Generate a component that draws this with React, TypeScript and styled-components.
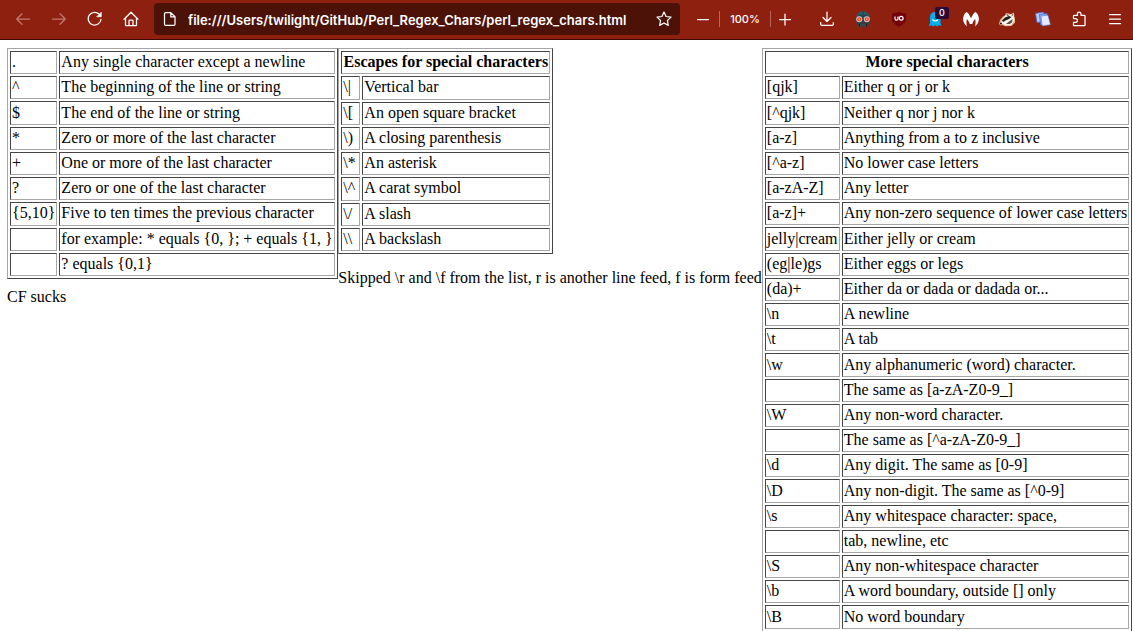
import React from "react";
import styled, { createGlobalStyle } from "styled-components";

const Global = createGlobalStyle`
  body {
    margin: 0;
    background: #fff;
    color: #000;
    font: 16px/19px "Liberation Serif", "Times New Roman", serif;
    overflow: hidden;
  }
`;

const Toolbar = styled.header`
  display: flex;
  align-items: center;
  height: 38px;
  padding: 0 0 1px 5px;
  background: #8e2010;
  border-bottom: 1px solid #3f0a03;
  font-family: Inter, "Liberation Sans", sans-serif;
  color: #fff;
`;

const ToolButton = styled.button<{ $width?: number }>`
  display: flex;
  align-items: center;
  justify-content: center;
  flex: none;
  width: ${(p) => p.$width ?? 36}px;
  height: 32px;
  padding: 0;
  border: 0;
  background: none;
  color: #fff;

  &:disabled {
    color: #c07a6f;
  }
`;

const AddressBar = styled.form`
  display: flex;
  align-items: center;
  flex: 1;
  min-width: 0;
  height: 32px;
  margin: 0 6px 0 5px;
  padding-left: 8px;
  border-radius: 4px;
  background: #4c1207;
`;

const AddressInput = styled.input`
  flex: 1;
  min-width: 0;
  margin-left: 10px;
  padding: 2px 0 0;
  border: 0;
  outline: 0;
  background: none;
  color: #fff;
  font: 600 13px/20px Inter, "Liberation Sans", sans-serif;
`;

const Divider = styled.span`
  flex: none;
  width: 1px;
  height: 16px;
  background: #b4675a;
`;

const ZoomLevel = styled.button`
  flex: none;
  width: 50px;
  padding: 0;
  border: 0;
  background: none;
  color: #fff;
  font: 500 11px/16px Inter, "Liberation Sans", sans-serif;
`;

const Extensions = styled.nav`
  display: flex;
  margin-left: 10px;
`;

const BadgeHolder = styled.span`
  position: relative;
  display: flex;
`;

const Badge = styled.span`
  position: absolute;
  top: -4px;
  right: -6px;
  width: 14px;
  border-radius: 2px;
  background: #2b0a35;
  color: #fff;
  font: 500 9px/12px Inter, "Liberation Sans", sans-serif;
  text-align: center;
`;

const Page = styled.main`
  display: flex;
  align-items: flex-start;
  padding: 8px 0 0 7px;
`;

const Column = styled.section`
  flex: none;
`;

const Note = styled.p<{ $gap: number }>`
  margin: ${(p) => p.$gap}px 0 0;
  white-space: nowrap;
`;

const Grid = styled.table<{ $height: number }>`
  height: ${(p) => p.$height}px;
  border: 1px solid;
  border-color: #a6a6a6 #454545 #454545 #a6a6a6;
  border-collapse: separate;
  border-spacing: 2px;
  table-layout: fixed;
`;

const GridCol = styled.col<{ $width: number }>`
  width: ${(p) => p.$width}px;
`;

const Cell = styled.td`
  padding: 0 1px 2px;
  border: 1px solid;
  border-color: #454545 #a6a6a6 #a6a6a6 #454545;
  white-space: nowrap;
`;

type Row = [string, string];

const basics: Row[] = [
  [".", "Any single character except a newline"],
  ["^", "The beginning of the line or string"],
  ["$", "The end of the line or string"],
  ["*", "Zero or more of the last character"],
  ["+", "One or more of the last character"],
  ["?", "Zero or one of the last character"],
  ["{5,10}", "Five to ten times the previous character"],
  ["", "for example: * equals {0, }; + equals {1, }"],
  ["", "? equals {0,1}"],
];

const escapes: Row[] = [
  ["\\|", "Vertical bar"],
  ["\\[", "An open square bracket"],
  ["\\)", "A closing parenthesis"],
  ["\\*", "An asterisk"],
  ["\\^", "A carat symbol"],
  ["\\/", "A slash"],
  ["\\\\", "A backslash"],
];

const specials: Row[] = [
  ["[qjk]", "Either q or j or k"],
  ["[^qjk]", "Neither q nor j nor k"],
  ["[a-z]", "Anything from a to z inclusive"],
  ["[^a-z]", "No lower case letters"],
  ["[a-zA-Z]", "Any letter"],
  ["[a-z]+", "Any non-zero sequence of lower case letters"],
  ["jelly|cream", "Either jelly or cream"],
  ["(eg|le)gs", "Either eggs or legs"],
  ["(da)+", "Either da or dada or dadada or..."],
  ["\\n", "A newline"],
  ["\\t", "A tab"],
  ["\\w", "Any alphanumeric (word) character."],
  ["", "The same as [a-zA-Z0-9_]"],
  ["\\W", "Any non-word character."],
  ["", "The same as [^a-zA-Z0-9_]"],
  ["\\d", "Any digit. The same as [0-9]"],
  ["\\D", "Any non-digit. The same as [^0-9]"],
  ["\\s", "Any whitespace character: space,"],
  ["", "tab, newline, etc"],
  ["\\S", "Any non-whitespace character"],
  ["\\b", "A word boundary, outside [] only"],
  ["\\B", "No word boundary"],
];

interface RegexTableProps {
  title?: string;
  rows: Row[];
  widths: [number, number];
  height: number;
}

function RegexTable({ title, rows, widths, height }: RegexTableProps) {
  return (
    <Grid $height={height}>
      <colgroup>
        <GridCol $width={widths[0]} />
        <GridCol $width={widths[1]} />
      </colgroup>
      <tbody>
        {title && (
          <tr>
            <Cell as="th" colSpan={2}>{title}</Cell>
          </tr>
        )}
        {rows.map(([key, text]) => (
          <tr key={key + text}>
            <Cell>{key || "\u00a0"}</Cell>
            <Cell>{text}</Cell>
          </tr>
        ))}
      </tbody>
    </Grid>
  );
}

const Line = ({ children }: { children: React.ReactNode }) => (
  <svg width="16" height="16" viewBox="0 0 16 16" fill="none" stroke="currentColor" strokeWidth="1.25" strokeLinecap="round" strokeLinejoin="round" aria-hidden="true">
    {children}
  </svg>
);

const Art = ({ children }: { children: React.ReactNode }) => (
  <svg width="16" height="16" viewBox="0 0 16 16" aria-hidden="true">{children}</svg>
);

export default function App() {
  return (
    <>
      <Global />
      <Toolbar>
        <ToolButton disabled aria-label="Back">
          <Line><path d="M14.5 8H1.7M7 2.7 1.7 8 7 13.3" /></Line>
        </ToolButton>
        <ToolButton disabled aria-label="Forward">
          <Line><path d="M1.5 8h12.8M9 2.7 14.3 8 9 13.3" /></Line>
        </ToolButton>
        <ToolButton aria-label="Reload">
          <Line>
            <path d="M14 8.3A6.4 6.4 0 1 1 12.3 3.3" />
            <path d="M14.3 1.5v4.3H10z" fill="currentColor" strokeWidth="0.6" />
          </Line>
        </ToolButton>
        <ToolButton aria-label="Home">
          <Line><path d="M1 8.2 8 1.2l7 7M2.5 7v7q0 .7.7.7h9.6q.7 0 .7-.7V7M6 14.5V9.8q0-.8.8-.8h2.4q.8 0 .8.8v4.7" /></Line>
        </ToolButton>
        <AddressBar>
          <Line><path d="M3.7 1.6h5.1l4.2 4.2v7.4q0 1.2-1.2 1.2H3.7q-1.2 0-1.2-1.2V2.8q0-1.2 1.2-1.2zM8.8 1.6v4.2H13" /></Line>
          <AddressInput aria-label="Address" defaultValue="file:///Users/twilight/GitHub/Perl_Regex_Chars/perl_regex_chars.html" />
          <ToolButton type="button" $width={32} aria-label="Bookmark this page">
            <Line><path d="M8 1l2.1 4.5 4.9.6-3.6 3.4.9 4.9L8 12l-4.3 2.4.9-4.9L1 6.1l4.9-.6z" /></Line>
          </ToolButton>
        </AddressBar>
        <ToolButton $width={33} aria-label="Zoom out">
          <Line><path d="M2.5 8.5h11" /></Line>
        </ToolButton>
        <Divider />
        <ZoomLevel>100%</ZoomLevel>
        <Divider />
        <ToolButton $width={28} aria-label="Zoom in">
          <Line><path d="M2.5 8.5h11M8 3v11" /></Line>
        </ToolButton>
        <Extensions>
          <ToolButton aria-label="Downloads">
            <Line><path d="M8 1v9.2M4 6.5l4 4 4-4M1.7 11.5v1.7q0 1.1 1.1 1.1h10.4q1.1 0 1.1-1.1v-1.7" /></Line>
          </ToolButton>
          <ToolButton aria-label="Privacy robot">
            <Art>
              <path d="M1.5 7Q1.5.3 8 .3T14.500 7z" fill="#2c5a68" />
              <path d="M3 3.500 8 5.500 13 3.500M8 .5v5" fill="none" stroke="#17333d" strokeWidth=".8" />
              <path d="M1.500 8h13v4.500L12 15.700H4l-2.500-3.200z" fill="#33424a" />
              <circle cx="4.200" cy="8.300" r="3" fill="#d6c3bb" />
              <circle cx="11.800" cy="8.300" r="3" fill="#d6c3bb" />
              <circle cx="4.200" cy="8.300" r="2" fill="#e8452c" />
              <circle cx="11.800" cy="8.300" r="2" fill="#e8452c" />
              <circle cx="4.200" cy="8.300" r=".7" fill="#ffc2a8" />
              <circle cx="11.800" cy="8.300" r=".7" fill="#ffc2a8" />
              <path d="M4 12.500h8v2.700H4z" fill="#171c20" />
              <path d="M6 12.500v2.700M8 12.500v2.700M10 12.500v2.700" stroke="#77878c" strokeWidth=".8" />
            </Art>
          </ToolButton>
          <ToolButton aria-label="uBlock Origin">
            <Art>
              <path d="M8 .8q3 1.700 7 1.700V8q0 4.700-7 7.700Q1 12.700 1 8V2.500Q5 2.500 8 .8z" fill="#720009" />
              <path d="M4 5.500v2.200q0 1.500 1.500 1.500T7 7.700V5.500" fill="none" stroke="#fff" strokeWidth="1.200" />
              <circle cx="10.200" cy="7.300" r="1.900" fill="none" stroke="#fff" strokeWidth="1.200" />
            </Art>
          </ToolButton>
          <ToolButton aria-label="Ghostery">
            <BadgeHolder>
              <Art>
                <path d="M3 12V6.500Q3 1 8.200 1t5.300 5.500V12l1 3-2.500-1-1.600 1.500-2-1.300-2 1.300-1.700-1.300-2.900 1z" fill="#00aef0" />
                <path d="M5.500 8.500q2.700 3 5.500 0" fill="none" stroke="#fff" strokeWidth="1.200" />
              </Art>
              <Badge>0</Badge>
            </BadgeHolder>
          </ToolButton>
          <ToolButton aria-label="Malwarebytes">
            <Art>
              <path d="M4 15.500Q-1.500 10.500.8 4.500 1.700 1.800 3.800 1 6.500 2.800 8 7.200 9.500 2.800 12.200 1q2.100.8 3 3.500 2.300 6-3.200 11 1-3.500.2-7.500Q10.200 9.500 9.200 13H6.800Q5.800 9.500 3.800 8 3 12 4 15.500z" fill="#fff" />
            </Art>
          </ToolButton>
          <ToolButton aria-label="Privacy Badger">
            <Art>
              <path d="M0 13 1 9l3-3.500 2-1L7 2l3 .5 1.500.8L15 1.500l.3 4 .7 2v4L12.500 15l-6 .2L3 14l-1.500.5z" fill="#e9b98c" />
              <path d="M1 12.500 5 6.200 7.500 3l3 1L14 2.800l.8 3.500L15 10l-3 4-5.500.2-2.500-1.200z" fill="#f7f4ee" />
              <path d="M3 9.500 6 6.500l4-1.500 2.500 1L10 8 6.500 9.500 4 11z" fill="#201d1b" />
              <path d="m7 13 3-2.500 3.500-2.500-.3 3-2.200 2z" fill="#5a5550" />
              <path d="m7.500 3.700 2 .8M12.800 4.500l1.200-1" stroke="#201d1b" />
              <circle cx="2" cy="12.500" r="1" fill="#111" />
            </Art>
          </ToolButton>
          <ToolButton aria-label="Copy tabs">
            <Art>
              <path d="m.5 2.500 8-1.500 2 9.500-8.500 1z" fill="#b9c9fb" stroke="#4a6bd0" strokeWidth=".8" />
              <path d="m4.500 3.500 7.500-1 2 9.500-8.300 2z" fill="#9db5f6" stroke="#3f61ca" strokeWidth=".8" />
              <path d="m6 5 7-.8 2.500 9.500-8.300 1.300z" fill="#e3eaff" stroke="#5673cc" strokeWidth=".6" />
            </Art>
          </ToolButton>
          <ToolButton aria-label="Extensions">
            <Line><path d="M2.500 14.500v-3.200h2a1.900 1.900 0 0 0 0-3.800h-2V5q0-.6.6-.6h3.300V2.900a1.800 1.800 0 0 1 3.600 0v1.500h3.400q.6 0 .6.600v8.900q0 .6-.6.6z" /></Line>
          </ToolButton>
          <ToolButton aria-label="Open application menu">
            <Line><path d="M2.500 3.500h11M2.500 8h11M2.500 12.500h11" /></Line>
          </ToolButton>
        </Extensions>
      </Toolbar>
      <Page>
        <Column>
          <RegexTable rows={basics} widths={[47, 276]} height={231} />
          <Note $gap={8}>CF sucks</Note>
        </Column>
        <Column>
          <RegexTable title="Escapes for special characters" rows={escapes} widths={[19, 188]} height={206} />
          <Note $gap={14}>Skipped \r and \f from the list, r is another line feed, f is form feed</Note>
        </Column>
        <Column>
          <RegexTable title="More special characters" rows={specials} widths={[75, 287]} height={584} />
        </Column>
      </Page>
    </>
  );
}
